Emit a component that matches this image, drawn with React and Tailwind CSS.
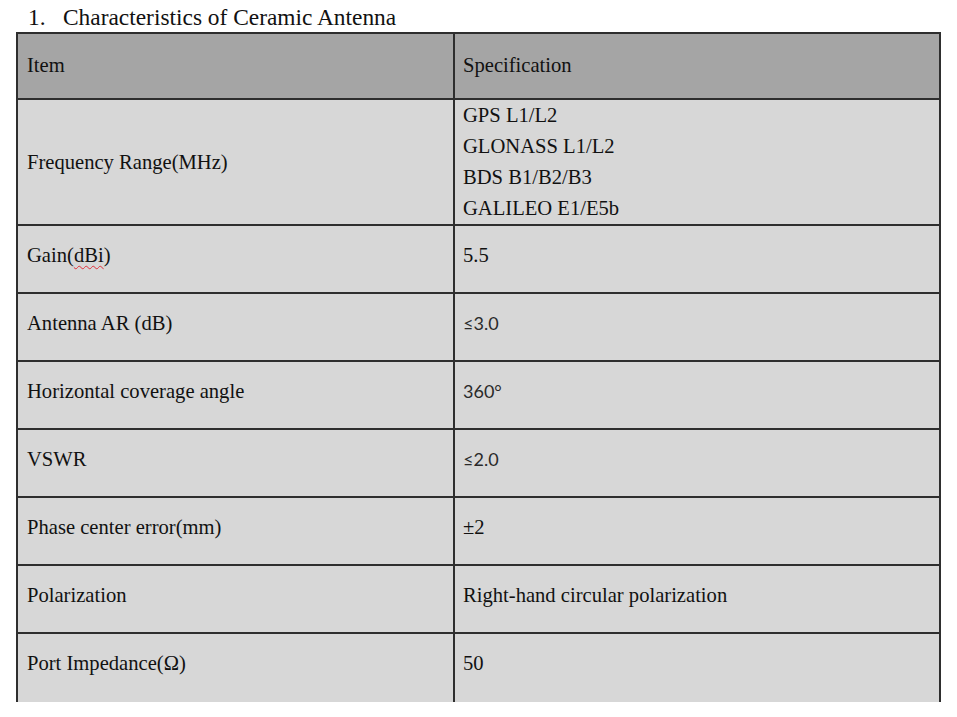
import React from "react";

// 规格表数据
const ROWS = [
  { item: "Gain(dBi)", spec: "5.5", spell: true },
  { item: "Antenna AR (dB)", spec: "≤3.0", sans: true },
  { item: "Horizontal coverage angle", spec: "360°", sans: true },
  { item: "VSWR", spec: "≤2.0", sans: true },
  { item: "Phase center error(mm)", spec: "±2" },
  { item: "Polarization", spec: "Right-hand circular polarization" },
  { item: "Port Impedance(Ω)", spec: "50", last: true },
];

const BANDS = ["GPS L1/L2", "GLONASS L1/L2", "BDS B1/B2/B3", "GALILEO E1/E5b"];

const App = () => {
  return (
    <div className="w-[957px] h-[717px] overflow-hidden bg-white text-[#111] font-['Liberation_Serif','Times_New_Roman',serif]">
      {/* 标题 */}
      <div className="flex pl-[28px] pt-[4px] h-[32px] text-[23.4px] leading-[26px]">
        <span className="w-[35px]">1.</span>
        <span>Characteristics of Ceramic Antenna</span>
      </div>

      {/* 表格 */}
      <div className="ml-[16px] w-[925px] border-x-2 border-t-2 border-[#2e2e2e] text-[20.6px] leading-[31px]">
        <div className="flex h-[66px] bg-[#a5a5a5] border-b-2 border-[#2e2e2e]">
          <div className="w-[435px] pl-[9px] pt-[16px]">Item</div>
          <div className="flex-1 pl-[8px] pt-[16px] border-l-2 border-[#2e2e2e]">Specification</div>
        </div>

        <div className="flex h-[126px] bg-[#d7d7d7] border-b-2 border-[#2e2e2e]">
          <div className="w-[435px] pl-[9px] flex items-center">Frequency Range(MHz)</div>
          <div className="flex-1 pl-[8px] border-l-2 border-[#2e2e2e] flex flex-col">
            {BANDS.map((b) => (
              <span key={b}>{b}</span>
            ))}
          </div>
        </div>

        {ROWS.map((r) => (
          <div
            key={r.item}
            className={`flex bg-[#d7d7d7] ${r.last ? "h-[68px]" : "h-[68px] border-b-2 border-[#2e2e2e]"}`}
          >
            <div className="w-[435px] pl-[9px] pt-[14px]">
              {r.spell ? (
                <>
                  Gain(
                  <span className="underline decoration-wavy decoration-[#e0303a] decoration-1 underline-offset-[3px]">
                    dBi
                  </span>
                  )
                </>
              ) : (
                r.item
              )}
            </div>
            <div
              className={`flex-1 pl-[8px] pt-[14px] border-l-2 border-[#2e2e2e] ${
                r.sans ? "font-['Lato','Open_Sans',sans-serif] text-[18px] text-[#2a2a2a]" : ""
              }`}
            >
              {r.spec}
            </div>
          </div>
        ))}
      </div>
    </div>
  );
};

export default App;
